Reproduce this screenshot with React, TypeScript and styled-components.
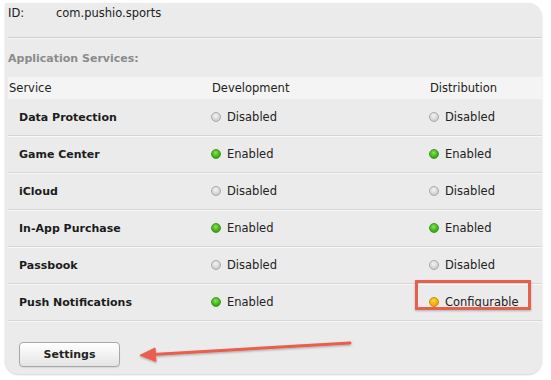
import React from "react";
import styled, { createGlobalStyle } from "styled-components";

const Global = createGlobalStyle`
  html, body { margin: 0; padding: 0; background: #ffffff; }
  body { font-family: "DejaVu Sans", "Liberation Sans", sans-serif; color: #1c1c1c; }
`;

const Page = styled.div`
  width: 551px;
  height: 380px;
  padding: 3px 9px 0 5px;
  box-sizing: border-box;
  overflow: hidden;
`;

const Panel = styled.div`
  position: relative;
  height: 371px;
  background: #ebebeb;
  border-radius: 0 14px 14px 14px;
  box-shadow: 0 1px 2px rgba(0, 0, 0, 0.18);
  padding-left: 3px;
  display: flex;
  flex-direction: column;
`;

const IdRow = styled.div`
  display: flex;
  align-items: center;
  height: 19px;
  font-size: 11.5px;
  color: #222;
`;

const IdLabel = styled.span`
  width: 48px;
  margin-left: 0px;
`;

const Divider = styled.div`
  margin-top: 15px;
  height: 1px;
  background: #cfcfcf;
  border-bottom: 1px solid #f7f7f7;
`;

const SectionTitle = styled.div`
  height: 38px;
  display: flex;
  align-items: center;
  font-size: 11px;
  font-weight: bold;
  color: #8b8b8b;
`;

const Table = styled.div`
  display: flex;
  flex-direction: column;
`;

const HeaderRow = styled.div`
  display: grid;
  grid-template-columns: 203px 218px 1fr;
  height: 22px;
  align-items: center;
  background: #f4f4f4;
  font-size: 11.5px;
  color: #222;
  padding-left: 1px;
`;

const Row = styled.div`
  display: grid;
  grid-template-columns: 203px 218px 1fr;
  height: 36px;
  align-items: center;
  border-bottom: 1px solid #d6d6d6;
  box-shadow: 0 1px 0 #f8f8f8;
`;

const Name = styled.div`
  padding-left: 11px;
  font-size: 11px;
  font-weight: bold;
  color: #1c1c1c;
`;

const Status = styled.div`
  position: relative;
  display: flex;
  align-items: center;
  gap: 6px;
  font-size: 11.5px;
  color: #222;
`;

type DotKind = "on" | "off" | "config";

const dotBg: Record<DotKind, string> = {
  on: "radial-gradient(circle at 45% 35%, #8ee05a 0%, #43b51a 55%, #2c8d0c 100%)",
  off: "radial-gradient(circle at 45% 35%, #f4f4f4 0%, #d4d4d4 60%, #bdbdbd 100%)",
  config: "radial-gradient(circle at 45% 35%, #ffd64a 0%, #f2ae08 60%, #d98a00 100%)",
};

const dotBorder: Record<DotKind, string> = {
  on: "#3a9a18",
  off: "#a9a9a9",
  config: "#c98a00",
};

const Dot = styled.span<{ $kind: DotKind }>`
  width: 10px;
  height: 10px;
  border-radius: 50%;
  box-sizing: border-box;
  background: ${(p) => dotBg[p.$kind]};
  border: 1px solid ${(p) => dotBorder[p.$kind]};
  flex: none;
`;

const Highlight = styled.div`
  position: absolute;
  left: -14px;
  top: -15px;
  width: 116px;
  height: 30px;
  box-sizing: border-box;
  border: 3px solid #e8604d;
  box-shadow: 0 1px 2px rgba(0, 0, 0, 0.25);
  pointer-events: none;
`;

const Footer = styled.div`
  padding: 21px 0 0 11px;
`;

const Button = styled.button`
  width: 101px;
  height: 25px;
  border: 1px solid #a8a8a8;
  border-radius: 4px;
  background: linear-gradient(#ffffff, #f2f2f2 50%, #e4e4e4);
  box-shadow: 0 1px 1px rgba(0, 0, 0, 0.08);
  font-family: "DejaVu Sans", "Liberation Sans", sans-serif;
  font-size: 11px;
  font-weight: bold;
  color: #222;
  padding: 0;
`;

const Arrow = styled.svg`
  position: absolute;
  left: 0;
  top: 0;
  pointer-events: none;
`;

type Service = { name: string; dev: DotKind; dist: DotKind };

const services: Service[] = [
  { name: "Data Protection", dev: "off", dist: "off" },
  { name: "Game Center", dev: "on", dist: "on" },
  { name: "iCloud", dev: "off", dist: "off" },
  { name: "In-App Purchase", dev: "on", dist: "on" },
  { name: "Passbook", dev: "off", dist: "off" },
  { name: "Push Notifications", dev: "on", dist: "config" },
];

const label: Record<DotKind, string> = {
  on: "Enabled",
  off: "Disabled",
  config: "Configurable",
};

function StatusCell({ kind }: { kind: DotKind }) {
  return (
    <Status>
      <Dot $kind={kind} />
      <span>{label[kind]}</span>
      {kind === "config" && <Highlight />}
    </Status>
  );
}

export default function App() {
  return (
    <>
      <Global />
      <Page>
        <Panel>
          <IdRow>
            <IdLabel>ID:</IdLabel>
            <span>com.pushio.sports</span>
          </IdRow>
          <Divider />
          <SectionTitle>Application Services:</SectionTitle>
          <Table>
            <HeaderRow>
              <span>Service</span>
              <span>Development</span>
              <span>Distribution</span>
            </HeaderRow>
            {services.map((s) => (
              <Row key={s.name}>
                <Name>{s.name}</Name>
                <StatusCell kind={s.dev} />
                <StatusCell kind={s.dist} />
              </Row>
            ))}
          </Table>
          <Footer>
            <Button>Settings</Button>
          </Footer>
          <Arrow width="537" height="371" viewBox="0 0 537 371">
            <defs>
              <filter id="sh" x="-10%" y="-50%" width="120%" height="200%">
                <feDropShadow dx="0" dy="1" stdDeviation="0.8" floodOpacity="0.3" />
              </filter>
            </defs>
            <g filter="url(#sh)" fill="#e8604d" stroke="#e8604d">
              <line x1="345" y1="340" x2="148" y2="351.5" strokeWidth="3" strokeLinecap="round" />
              <polygon points="135,352.3 150,345 151,358.5" strokeWidth="1" strokeLinejoin="round" />
            </g>
          </Arrow>
        </Panel>
      </Page>
    </>
  );
}
